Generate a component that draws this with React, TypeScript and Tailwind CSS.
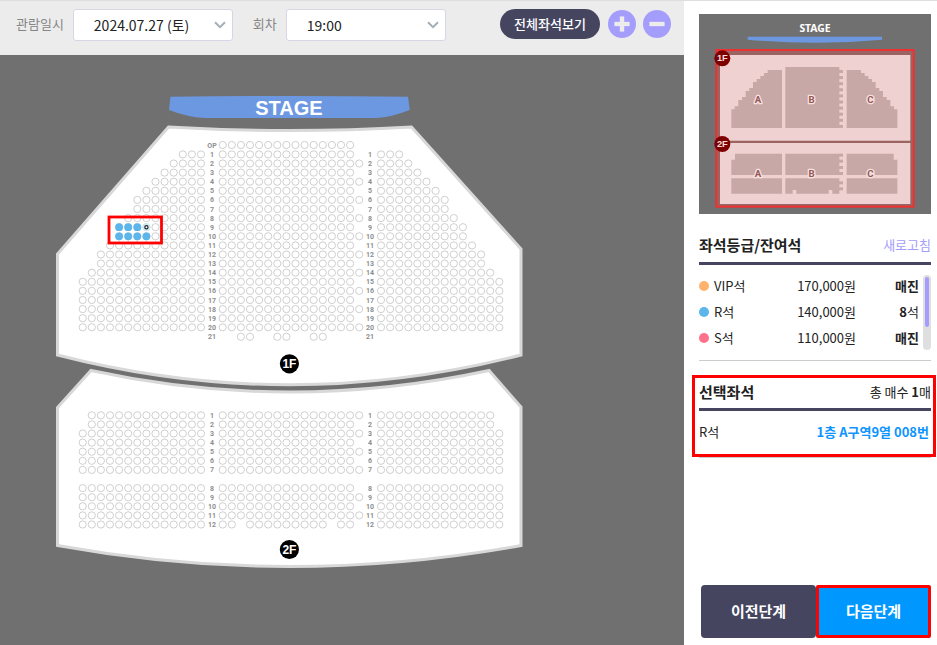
import { Minus, Plus } from 'lucide-react'
import { useState } from 'react'

interface SeatRow {
    label: string
    y: number
    left: number
    center: number[]
    right: number
}

interface Grade {
    name: string
    price: string
    color: string
    remain: number
}

const PITCH = 9.1
const LEFT_X = 82.7
const CENTER_X = 222.7
const RIGHT_X = 381
const SIDE_COLS = 14

const range = (count: number) => Array.from({ length: count }, (_, i) => i)

const firstFloorSides = [
    3, 4, 5, 6, 7, 8, 8, 9, 10, 10, 11, 12, 12, 13, 14, 14, 14, 14, 14, 14,
]

const firstFloor: SeatRow[] = [
    { label: 'OP', y: 145, left: 0, center: range(15), right: 0 },
    ...firstFloorSides.map((count, i) => ({
        label: String(i + 1),
        y: 154.4 + i * PITCH,
        left: count,
        center: range(i % 2 === 1 ? 16 : 15),
        right: count,
    })),
    { label: '21', y: 336.8, left: 0, center: [2, 3, 6, 7, 10, 11], right: 0 },
]

const secondFloor: SeatRow[] = range(12).map((i) => ({
    label: String(i + 1),
    // the aisle between row 7 and row 8 takes one row
    y: 415.3 + (i > 6 ? i + 1 : i) * PITCH,
    left: i < 2 ? 13 : 14,
    center:
        i === 11
            ? range(15).filter((col) => col !== 2 && col !== 12)
            : range(i % 2 === 0 ? 16 : 15),
    right: i < 2 ? 13 : 14,
}))

const openSeats = [
    { x: 4, row: 8 },
    { x: 5, row: 8 },
    { x: 6, row: 8 },
    { x: 4, row: 9 },
    { x: 5, row: 9 },
    { x: 6, row: 9 },
    { x: 7, row: 9 },
]

const grades: Grade[] = [
    { name: 'VIP석', price: '170,000원', color: 'bg-[#ffb26b]', remain: 0 },
    { name: 'R석', price: '140,000원', color: 'bg-[#5cb6ec]', remain: 8 },
    { name: 'S석', price: '110,000원', color: 'bg-[#ff708d]', remain: 0 },
]

const Seats = ({ rows }: { rows: SeatRow[] }) => (
    <>
        {rows.map((row) => {
            const xs = [
                ...range(row.left).map(
                    (i) => LEFT_X + (SIDE_COLS - 1 - i) * PITCH
                ),
                ...row.center.map((i) => CENTER_X + i * PITCH),
                ...range(row.right).map((i) => RIGHT_X + i * PITCH),
            ]
            return (
                <g key={row.label}>
                    <g fill="#fff" stroke="#c9c9c9" strokeWidth="0.9">
                        {xs.map((x) => (
                            <circle key={x} cx={x} cy={row.y} r="3.6" />
                        ))}
                    </g>
                    <g
                        fill="#8e8e8e"
                        fontSize="7"
                        fontWeight="700"
                        textAnchor="middle"
                        className="font-['Roboto',sans-serif]"
                    >
                        <text x="212" y={row.y + 2.5}>
                            {row.label}
                        </text>
                        {row.label !== 'OP' && (
                            <text x="370" y={row.y + 2.5}>
                                {row.label}
                            </text>
                        )}
                    </g>
                </g>
            )
        })}
    </>
)

const FloorBadge = ({ y, label }: { y: number; label: string }) => (
    <g>
        <circle cx="289.4" cy={y} r="9.6" fill="#000" />
        <text
            x="289.4"
            y={y + 4}
            fill="#fff"
            fontSize="12"
            fontWeight="700"
            textAnchor="middle"
        >
            {label}
        </text>
    </g>
)

const SeatMap = () => (
    <svg
        viewBox="0 55 684 590"
        className="block w-full font-['Liberation_Sans',sans-serif]"
        role="img"
        aria-label="좌석 배치도"
    >
        <path
            d="M170.5 96.8Q289 95 408 96.8L409.7 110Q392 117 376 118H205Q187 117 169 110Z"
            fill="#6c98e2"
        />
        <text
            x="289"
            y="114.5"
            fill="#fff"
            fontSize="20"
            fontWeight="700"
            textAnchor="middle"
        >
            STAGE
        </text>

        <g fill="#fff" stroke="#d8d8d8" strokeWidth="3">
            <path d="M168.5 127Q289 134 411.5 127L521 249V355Q289 414.5 57.5 355V254Z" />
            <path d="M91 370.5Q289 413.5 489 370.5L521 407V545.5Q289 587.5 57.5 545.5V407.5Z" />
        </g>

        <Seats rows={firstFloor} />
        <Seats rows={secondFloor} />

        {openSeats.map((seat) => (
            <circle
                key={`${seat.x}-${seat.row}`}
                cx={LEFT_X + seat.x * PITCH}
                cy={154.4 + seat.row * PITCH}
                r="3.9"
                fill="#5cb6ec"
            />
        ))}
        <circle cx="146.4" cy="227.2" r="3.9" fill="#cdeaf5" />
        <circle
            cx="146.4"
            cy="227.2"
            r="1.6"
            fill="#fff"
            stroke="#222"
            strokeWidth="1.2"
        />
        <rect
            x="109"
            y="217"
            width="52.5"
            height="26"
            fill="none"
            stroke="#f00"
            strokeWidth="2.8"
        />

        <FloorBadge y={363.8} label="1F" />
        <FloorBadge y={549.5} label="2F" />
    </svg>
)

const SideBlock = () => (
    <>
        <path d="M248 210H291V384H139V328H149V319H160V300H171V291H182V273H193V264H204V246H215V237H226V228H237V219H248Z" />
        <path d="M150 461H291V525H139V479H150ZM139 535H291V581H139Z" />
    </>
)

const areaLabels = [
    { label: 'A', x: 219 },
    { label: 'B', x: 380 },
    { label: 'C', x: 556 },
]

const MiniMap = () => (
    <svg
        viewBox="42 42 696 600"
        className="block w-full bg-[#707070]"
        role="img"
        aria-label="전체 좌석 미니맵"
    >
        <text
            x="390"
            y="95"
            fill="#fff"
            fontSize="31"
            fontWeight="700"
            textAnchor="middle"
            className="font-['Noto_Sans',sans-serif]"
        >
            STAGE
        </text>
        <path d="M188 110H591V119Q390 138 188 119Z" fill="#6c98e2" />

        <rect
            x="94"
            y="150"
            width="592"
            height="470"
            fill="#9b6362"
            stroke="#ee3030"
            strokeWidth="6"
        />
        <path d="M105 165H676V422H105ZM105 429H676V612H105Z" fill="#eed1d0" />

        <g fill="#c7a8a6">
            <SideBlock />
            <g transform="matrix(-1 0 0 1 776 0)">
                <SideBlock />
            </g>
            <path d="M301 201H463V384H301ZM301 461H463V525H301Z" />
            <path d="M301 535H463V581H442V570H431V581H334V570H323V581H301Z" />
            {range(10).map((i) => (
                <rect
                    key={i}
                    x="462"
                    y={210 + i * 18.3}
                    width="12"
                    height="9"
                />
            ))}
            {[461, 479, 498, 516, 544, 562].map((y) => (
                <rect key={y} x="462" y={y} width="12" height="9" />
            ))}
        </g>

        <g
            fill="#965656"
            stroke="#f6e2e1"
            strokeWidth="8"
            strokeLinejoin="round"
            fontSize="29"
            fontWeight="700"
            textAnchor="middle"
            className="font-['Roboto',sans-serif] [paint-order:stroke]"
        >
            {areaLabels.map(({ label, x }) => (
                <g key={label}>
                    <text x={x} y="309">
                        {label}
                    </text>
                    <text x={x} y="532">
                        {label}
                    </text>
                </g>
            ))}
        </g>

        {[175, 432].map((y, i) => (
            <g key={y}>
                <circle cx="112" cy={y} r="24" fill="#7d0000" />
                <text
                    x="112"
                    y={y + 9}
                    fill="#f3dcdc"
                    fontSize="28"
                    fontWeight="700"
                    textAnchor="middle"
                    className="font-['Liberation_Sans',sans-serif]"
                >
                    {`${i + 1}F`}
                </text>
            </g>
        ))}
    </svg>
)

interface SelectFieldProps {
    id: string
    label: string
    options: string[]
}

const SelectField = ({ id, label, options }: SelectFieldProps) => {
    const [value, setValue] = useState(options[0])

    return (
        <div className="flex items-center gap-[9px]">
            <label htmlFor={id} className="text-[13px] text-[#868686]">
                {label}
            </label>
            <div className="relative mt-[2px]">
                <select
                    id={id}
                    value={value}
                    onChange={(e) => setValue(e.target.value)}
                    className="h-8 w-40 appearance-none rounded-[3px] border border-[#d6d6e4] bg-white pl-5 text-sm text-[#222]"
                >
                    {options.map((option) => (
                        <option key={option}>{option}</option>
                    ))}
                </select>
                <svg
                    viewBox="0 0 12 8"
                    className="pointer-events-none absolute top-3 right-[7px] h-2 w-3"
                    fill="none"
                    stroke="#a3afb7"
                    strokeWidth="2"
                >
                    <path d="M1 1.2L6 6.2L11 1.2" />
                </svg>
            </div>
        </div>
    )
}

const App = () => {
    return (
        <div className="flex min-h-screen border-t border-[#dedede] bg-white font-['Noto_Sans_CJK_KR',sans-serif] text-[#222]">
            <main className="flex min-w-0 flex-1 flex-col bg-[#707070]">
                <header className="flex h-[54px] items-center justify-between bg-[#ececec] pr-[13px] pb-2 pl-4">
                    <div className="flex gap-5">
                        <SelectField
                            id="date"
                            label="관람일시"
                            options={['2024.07.27 (토)']}
                        />
                        <SelectField
                            id="time"
                            label="회차"
                            options={['19:00']}
                        />
                    </div>
                    <div className="flex items-center gap-[7px]">
                        <button className="h-[30px] w-[100px] rounded-full bg-[#454560] text-[13px] font-medium text-white">
                            전체좌석보기
                        </button>
                        <button
                            aria-label="확대"
                            className="ml-px flex size-7 items-center justify-center rounded-full bg-[#a49dfb] text-[#ececec]"
                        >
                            <Plus size={26} strokeWidth={4} strokeLinecap="butt" />
                        </button>
                        <button
                            aria-label="축소"
                            className="flex size-7 items-center justify-center rounded-full bg-[#a49dfb] text-[#ececec]"
                        >
                            <Minus size={26} strokeWidth={4} strokeLinecap="butt" />
                        </button>
                    </div>
                </header>
                <SeatMap />
            </main>

            <aside className="flex w-[253px] shrink-0 flex-col pt-[13px] pr-[6px] pb-[7px] pl-[15px]">
                <MiniMap />

                <section>
                    <div className="flex h-[51px] items-center justify-between border-b-3 border-[#454560] pt-[14px]">
                        <h2 className="text-[15px] font-bold">
                            좌석등급/잔여석
                        </h2>
                        <button className="text-[13px] text-[#a49dfb]">
                            새로고침
                        </button>
                    </div>
                    <div className="flex justify-between border-b border-[#ccc] pt-2 pb-[9px]">
                        <table className="w-[220px] text-[13px]">
                            <tbody>
                                {grades.map((grade) => (
                                    <tr key={grade.name} className="h-[26px]">
                                        <td className="p-0">
                                            <span className="flex items-center gap-[5px]">
                                                <span
                                                    className={`size-[10px] rounded-full ${grade.color}`}
                                                />
                                                {grade.name}
                                            </span>
                                        </td>
                                        <td className="p-0 text-right">
                                            {grade.price}
                                        </td>
                                        <td className="w-[63px] p-0 text-right">
                                            {grade.remain > 0 ? (
                                                <>
                                                    <b>{grade.remain}</b>석
                                                </>
                                            ) : (
                                                <b>매진</b>
                                            )}
                                        </td>
                                    </tr>
                                ))}
                            </tbody>
                        </table>
                        <div className="mt-[2px] h-[75px] w-2 rounded-full bg-[#dfdfdf] p-[2px]">
                            <div className="h-[50px] rounded-full bg-[#a49dfb]" />
                        </div>
                    </div>
                </section>

                <section className="mt-[14px] -mr-[5px] -ml-[7px] border-3 border-[#f00] pr-[2px] pl-1">
                    <div className="flex h-[33px] items-center justify-between border-b-3 border-[#454560] pb-[2px]">
                        <h2 className="text-[15px] font-bold">선택좌석</h2>
                        <p className="text-[13px]">
                            총 매수 <b>1</b>매
                        </p>
                    </div>
                    <div className="flex h-[43px] items-center justify-between pr-[2px] pb-[2px] text-[13px]">
                        <span>R석</span>
                        <a href="#" className="font-bold text-[#0d94ff]">
                            1층 A구역9열 008번
                        </a>
                    </div>
                </section>
                <hr className="border-[#ccc]" />

                <div className="mt-auto ml-[2px] flex text-[15px] font-bold text-white">
                    <button className="h-[53px] w-1/2 rounded-[4px] bg-[#454560]">
                        이전단계
                    </button>
                    <button className="h-[53px] w-1/2 rounded-[2px] border-3 border-[#f00] bg-[#0098ff]">
                        다음단계
                    </button>
                </div>
            </aside>
        </div>
    )
}

export default App
